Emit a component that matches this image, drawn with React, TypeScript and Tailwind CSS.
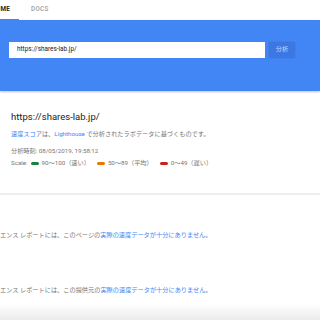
import React from 'react';

const font = "font-['Roboto','Noto_Sans_CJK_JP',sans-serif]";

const scale = [
  { label: '90〜100（速い）', color: 'bg-[#178239]' },
  { label: '50〜89（平均）', color: 'bg-[#e67700]' },
  { label: '0〜49（遅い）', color: 'bg-[#c7221f]' },
];

export default function App() {
  return (
    <div className={`relative w-[320px] h-[320px] overflow-hidden bg-white ${font}`}>
      {/* Tabs */}
      <div className="h-[20px] flex items-stretch ml-[-18px] text-[6.3px] font-medium tracking-[0.3px]">
        <div className="px-[9px] flex items-center border-b-[1.5px] border-[#4285f4] text-[#212121] font-bold">HOME</div>
        <div className="pl-[12px] flex items-center text-[#9e9e9e]">DOCS</div>
      </div>

      {/* Search band */}
      <div className="h-[71px] bg-[#4285f4] shadow-[0_1px_2px_rgba(0,0,0,0.25)] pt-[22px] pl-[9px]">
        <div className="flex gap-[4px]">
          <div className="w-[256px] h-[16px] bg-white flex items-center pl-[8px] text-[6.4px] text-[#212121]">
            https://shares-lab.jp/
          </div>
          <div className="w-[26px] h-[16px] bg-[#3b78e3] shadow-[0_0_1px_rgba(0,0,0,0.2)] flex items-center justify-center text-[6.2px] text-[#c9dafb]">
            分析
          </div>
        </div>
      </div>

      {/* Summary */}
      <div className="pl-[11px] pt-[20px]">
        <div className="text-[9.5px] leading-[12px] text-[#212121]">https://shares-lab.jp/</div>
        <div className="mt-[6px] text-[6.2px] leading-[10px] text-[#757575] whitespace-nowrap">
          <span className="text-[#4285f4]">速度スコア</span>は、<span className="text-[#4285f4]">Lighthouse</span> で分析されたラボデータに基づくものです。
        </div>
        <div className="mt-[7px] text-[6.2px] leading-[10px] text-[#757575]">分析時刻: 08/05/2019, 19:58:12</div>
        <div className="mt-[2px] flex items-center text-[6.2px] leading-[10px] text-[#757575] whitespace-nowrap">
          <span>Scale:</span>
          {scale.map((s) => (
            <span key={s.label} className="flex items-center ml-[3px] mr-[4px]">
              <span className={`w-[8px] h-[3px] rounded-full ${s.color} mr-[3px]`} />
              {s.label}
            </span>
          ))}
        </div>
      </div>

      <div className="mt-[25px] h-[2px] bg-[#eeeeee]" />

      <div className="mt-[35px] text-[6.2px] leading-[10px] text-[#757575] whitespace-nowrap">
        エンス レポートには、このページの<span className="text-[#4285f4]">実際の速度データが十分にありません</span>。
      </div>
      <div className="mt-[45px] text-[6.2px] leading-[10px] text-[#757575] whitespace-nowrap">
        エンス レポートには、この提供元の<span className="text-[#4285f4]">実際の速度データが十分にありません</span>。
      </div>

      <div className="absolute inset-x-0 bottom-0 h-[16px] bg-gradient-to-b from-white to-[#ebebeb]" />
    </div>
  );
}
